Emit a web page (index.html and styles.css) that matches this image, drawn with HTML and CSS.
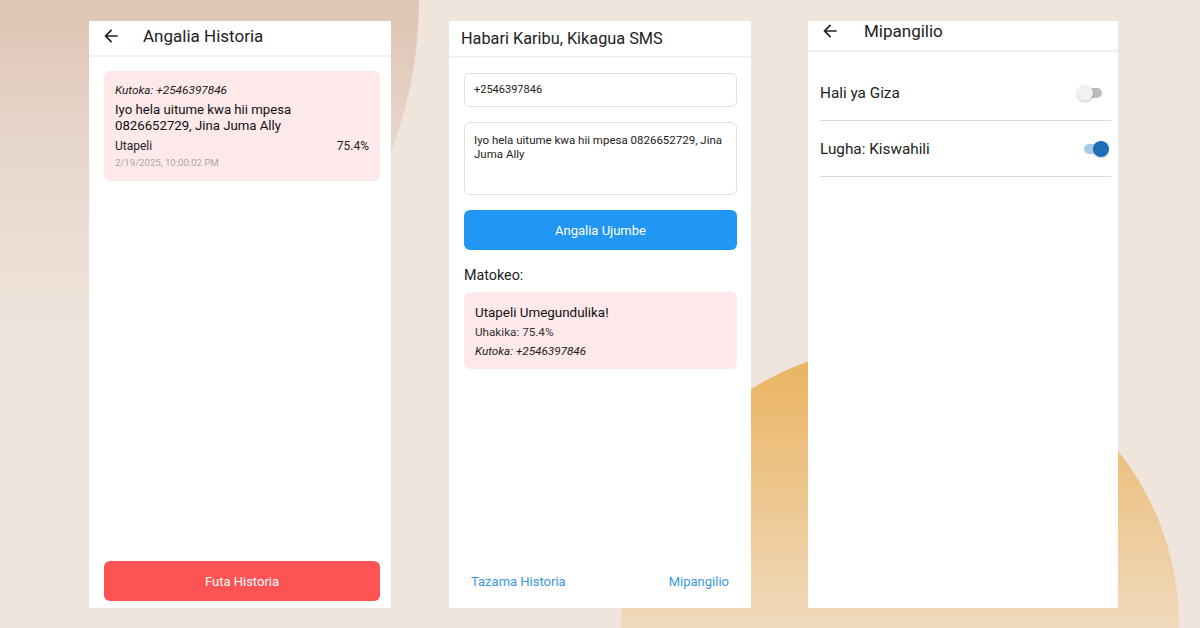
FILE: index.html
```html
<!DOCTYPE html>
<html lang="sw">
<head>
<meta charset="utf-8">
<title>Kikagua SMS</title>
<link rel="stylesheet" href="styles.css">
</head>
<body>
<div class="backdrop" aria-hidden="true">
  <div class="blob blob-top"></div>
  <div class="blob blob-bottom"></div>
</div>
<main class="screens">
  <section class="phone phone-history">
    <header class="bar bar-history">
      <svg class="back" viewBox="0 0 24 24" aria-hidden="true"><path d="M20 11H7.83l5.59-5.59L12 4l-8 8 8 8 1.41-1.41L7.83 13H20v-2z"/></svg>
      <h1 class="bar-title">Angalia Historia</h1>
    </header>
    <div class="history-body">
      <article class="msg-card">
        <p class="msg-from">Kutoka: +2546397846</p>
        <p class="msg-text">Iyo hela uitume kwa hii mpesa 0826652729, Jina Juma Ally</p>
        <div class="msg-meta"><span>Utapeli</span><span>75.4%</span></div>
        <p class="msg-date">2/19/2025, 10:00:02 PM</p>
      </article>
    </div>
    <button class="btn btn-danger">Futa Historia</button>
  </section>

  <section class="phone phone-home">
    <header class="bar bar-home">
      <h1 class="bar-title bar-title-home">Habari Karibu, Kikagua SMS</h1>
    </header>
    <div class="home-body">
      <div class="field field-input">+2546397846</div>
      <div class="field field-area">Iyo hela uitume kwa hii mpesa 0826652729, Jina Juma Ally</div>
      <button class="btn btn-primary">Angalia Ujumbe</button>
      <h2 class="section-label">Matokeo:</h2>
      <div class="result-card">
        <p class="result-title">Utapeli Umegundulika!</p>
        <p class="result-line">Uhakika: 75.4%</p>
        <p class="result-line result-from">Kutoka: +2546397846</p>
      </div>
    </div>
    <nav class="home-links">
      <a class="text-link">Tazama Historia</a>
      <a class="text-link">Mipangilio</a>
    </nav>
  </section>

  <section class="phone phone-settings">
    <header class="bar bar-settings">
      <svg class="back" viewBox="0 0 24 24" aria-hidden="true"><path d="M20 11H7.83l5.59-5.59L12 4l-8 8 8 8 1.41-1.41L7.83 13H20v-2z"/></svg>
      <h1 class="bar-title">Mipangilio</h1>
    </header>
    <div class="settings-body">
      <div class="setting-row">
        <span class="setting-label">Hali ya Giza</span>
        <span class="switch switch-off"></span>
      </div>
      <div class="setting-row">
        <span class="setting-label">Lugha: Kiswahili</span>
        <span class="switch switch-on"></span>
      </div>
    </div>
  </section>
</main>
</body>
</html>
```

FILE: styles.css
```css
* { box-sizing: border-box; }

html, body {
  margin: 0;
  padding: 0;
}

body {
  width: 1200px;
  height: 628px;
  overflow: hidden;
  position: relative;
  background: #efe5dd;
  font-family: "Roboto", "Noto Sans", sans-serif;
  color: #212121;
}

.backdrop {
  position: absolute;
  inset: 0;
  overflow: hidden;
  z-index: 0;
}

.blob {
  position: absolute;
  border-radius: 50%;
}

.blob-top {
  left: -441px;
  top: -430px;
  width: 860px;
  height: 860px;
  background: linear-gradient(to bottom, #dec5b4 0%, #dec5b4 50%, #e7d6cb 67%, #ede2d9 85%, #efe5dd 100%);
}

.blob-bottom {
  left: 621px;
  top: 346px;
  width: 558px;
  height: 558px;
  background: linear-gradient(to bottom, #e9b25e 0%, #ebb86b 8%, #f0d9bc 50%, #f2e0c8 100%);
}

.screens {
  position: relative;
  z-index: 1;
  display: flex;
  gap: 58px;
  padding: 21px 0 0 89px;
}

.phone {
  background: #ffffff;
  height: 587px;
  width: 302px;
  display: flex;
  flex-direction: column;
}

.phone-settings {
  width: 310px;
  margin-left: -1px;
}

p, h1, h2 { margin: 0; }

/* app bars */
.bar {
  display: flex;
  align-items: flex-start;
  border-bottom: 2px solid #f0f0f0;
  flex: none;
}

.bar-title {
  font-size: 17px;
  font-weight: 400;
  line-height: 20px;
  color: #222;
}

.bar-title-home {
  font-size: 16.3px;
}

.back {
  width: 20px;
  height: 20px;
  fill: #222;
  flex: none;
}

.bar-history {
  height: 36px;
  padding: 5px 0 0 12px;
}
.bar-history .back { margin-right: 22px; }

.bar-home {
  height: 37px;
  padding: 8px 0 0 12px;
}

.bar-settings {
  height: 31px;
  padding: 0 0 0 12px;
}
.bar-settings .back { margin-right: 24px; }

/* history */
.history-body {
  flex: 1;
  padding: 14px 11px 0 15px;
}

.msg-card {
  background: #fde8ea;
  border-radius: 6px;
  padding: 11px 11px 10px 11px;
}

.msg-from {
  font-size: 11.8px;
  line-height: 16px;
  font-style: italic;
  color: #222;
}

.msg-text {
  margin-top: 4px;
  font-size: 13.2px;
  line-height: 16px;
  color: #111;
}

.msg-meta {
  margin-top: 4px;
  display: flex;
  justify-content: space-between;
  font-size: 12px;
  line-height: 16px;
  color: #222;
}

.msg-date {
  margin-top: 1px;
  font-size: 9.6px;
  line-height: 16px;
  color: #a9a9a9;
}

/* buttons */
.btn {
  display: block;
  border: none;
  border-radius: 6px;
  height: 40px;
  font-family: inherit;
  font-size: 13px;
  color: #fff;
  padding: 0;
  flex: none;
}

.btn-danger {
  background: #fd5353;
  margin: 0 11px 7px 15px;
}

.btn-primary {
  background: #2196f3;
  width: 100%;
  margin-top: 15px;
}

/* home */
.home-body {
  flex: 1;
  padding: 15px 14px 0 15px;
}

.field {
  border: 1px solid #e0e0e0;
  border-radius: 6px;
  color: #222;
  padding: 0 9px;
}

.field-input {
  height: 34px;
  line-height: 32px;
  font-size: 11px;
}

.field-area {
  margin-top: 15px;
  height: 73px;
  padding-top: 10px;
  line-height: 14px;
  font-size: 11.5px;
}

.section-label {
  margin-top: 15px;
  font-size: 14.3px;
  font-weight: 400;
  line-height: 20px;
  color: #222;
}

.result-card {
  margin-top: 7px;
  background: #fde8ea;
  border-radius: 6px;
  padding: 11px 11px 8px;
}

.result-title {
  font-size: 13.4px;
  line-height: 20px;
  color: #111;
}

.result-line {
  font-size: 11.7px;
  line-height: 18px;
  color: #333;
}

.result-from {
  font-style: italic;
  line-height: 20px;
  color: #222;
}

.home-links {
  flex: none;
  display: flex;
  justify-content: space-between;
  padding: 0 22px 16px;
}

.text-link {
  font-size: 13px;
  line-height: 20px;
  color: #3a98e4;
}

/* settings */
.settings-body {
  padding: 13px 7px 0 12px;
}

.setting-row {
  height: 56px;
  display: flex;
  align-items: center;
  justify-content: space-between;
  border-bottom: 1px solid #dadada;
}

.setting-label {
  font-size: 15.3px;
  color: #222;
}

.switch {
  position: relative;
  width: 28px;
  height: 16px;
  margin-right: 2px;
}

.switch::before {
  content: "";
  position: absolute;
  left: 3px;
  right: 3px;
  top: 3px;
  height: 10px;
  border-radius: 5px;
}

.switch::after {
  content: "";
  position: absolute;
  top: 0;
  width: 16px;
  height: 16px;
  border-radius: 50%;
}

.switch-off { margin-right: 6px; }
.switch-off::before { background: #bdbdbd; }
.switch-off::after {
  left: 0;
  background: #f1f1f1;
  box-shadow: 0 1px 2px rgba(0,0,0,0.25);
}

.switch-on::before { background: #a8cbe8; }
.switch-on::after {
  right: 0;
  background: #1c6fb6;
  box-shadow: 0 1px 2px rgba(0,0,0,0.2);
}
```
